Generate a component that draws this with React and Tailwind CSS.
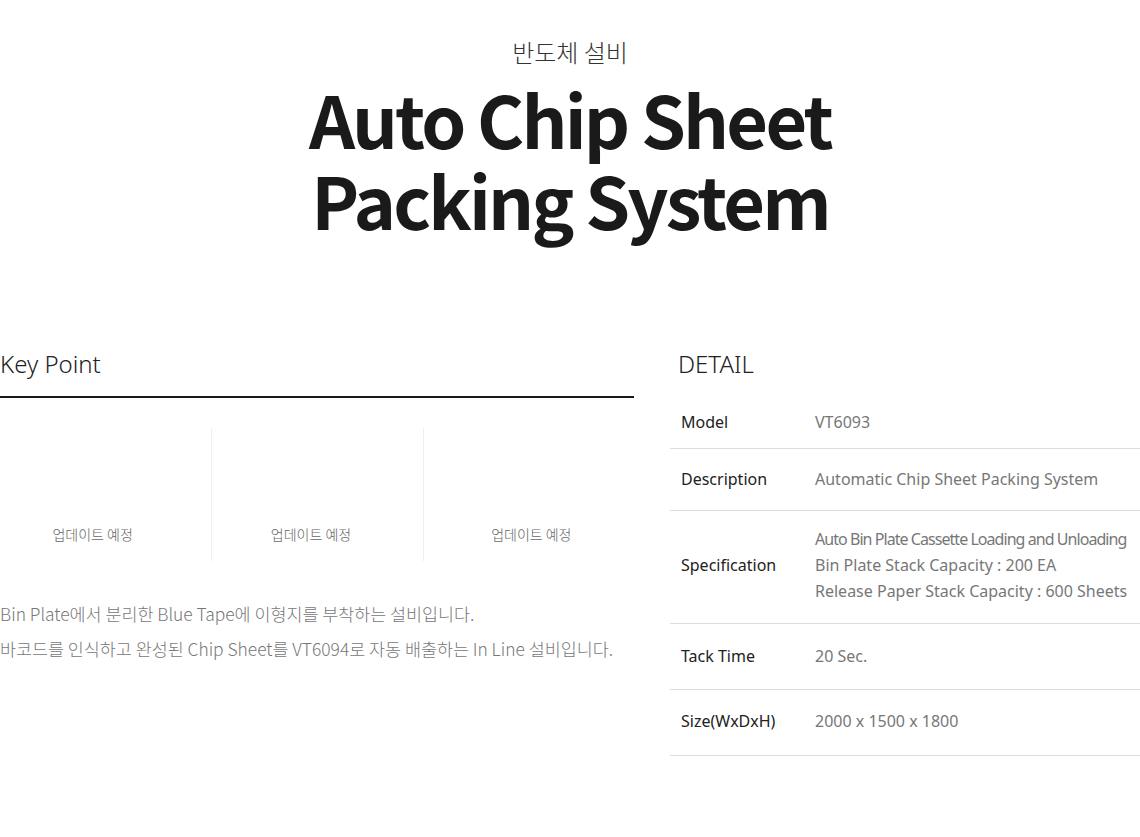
const specs = [
  { label: 'Model', value: ['VT6093'], row: 'h-[52px] pb-[1px]' },
  { label: 'Description', value: ['Automatic Chip Sheet Packing System'], row: 'h-[62px] pb-[2px]' },
  {
    label: 'Specification',
    value: [
      'Auto Bin Plate Cassette Loading and Unloading',
      'Bin Plate Stack Capacity : 200 EA',
      'Release Paper Stack Capacity : 600 Sheets',
    ],
    row: 'h-[113px] pb-[4px]',
  },
  { label: 'Tack Time', value: ['20 Sec.'], row: 'h-[66px] pb-[2px]' },
  { label: 'Size(WxDxH)', value: ['2000 x 1500 x 1800'], row: 'h-[66px] pb-[3px]' },
]

const points = ['pr-[26px]', 'pr-[13px]', 'pl-[5px]']

function App() {
  return (
    <main className="min-h-screen w-[1140px] bg-white font-['Noto_Sans','Noto_Sans_CJK_KR',sans-serif] text-[#222]">
      <header className="flex flex-col items-center pt-[34px]">
        <p className="font-['Noto_Sans_CJK_KR',sans-serif] text-[24px] font-light leading-[36px] text-[#333]">반도체 설비</p>
        <h1 className="mt-[7px] text-center font-['Noto_Sans_CJK_KR',sans-serif] text-[72px] font-bold leading-[81px] tracking-[-2.8px] text-[#1a1a1a]">
          Auto Chip Sheet
          <br />
          Packing System
        </h1>
      </header>

      <div className="mt-[107px] flex gap-[36px]">
        <section className="w-[634px]">
          <h2 className="text-[24px] font-light leading-[36px] text-[#222]">Key Point</h2>
          <div className="mt-[14px] h-[2px] bg-[#1a1a1a]" />
          <div className="mt-[30px] grid grid-cols-3">
            {points.map((pad, i) => (
              <div
                key={i}
                className={`flex h-[133px] items-end justify-center pb-[16px] ${pad} ${i > 0 ? 'border-l border-[#eeeeee]' : ''}`}
              >
                <span className="font-['Noto_Sans_CJK_KR',sans-serif] text-[14px] font-light text-[#666]">업데이트 예정</span>
              </div>
            ))}
          </div>
          <div className="mt-[35px] font-['Noto_Sans_CJK_KR',sans-serif] text-[17.4px] font-light leading-[35px] text-[#777]">
            <p>Bin Plate에서 분리한 Blue Tape에 이형지를 부착하는 설비입니다.</p>
            <p>바코드를 인식하고 완성된 Chip Sheet를 VT6094로 자동 배출하는 In Line 설비입니다.</p>
          </div>
        </section>

        <section className="flex-1">
          <h2 className="pl-[8px] text-[24px] font-light leading-[36px] text-[#222]">DETAIL</h2>
          <div className="mt-[15px]">
            {specs.map((s) => (
              <div key={s.label} className={`flex items-center border-b border-[#dddddd] pl-[11px] ${s.row}`}>
                <div className="w-[134px] shrink-0 text-[16px] leading-[26px] text-[#222]">{s.label}</div>
                <div className="whitespace-nowrap text-[16px] leading-[26px] text-[#777]">
                  {s.value.map((v) => (
                    <p key={v} className={v.startsWith('Auto Bin') ? 'tracking-[-0.95px]' : ''}>{v}</p>
                  ))}
                </div>
              </div>
            ))}
          </div>
        </section>
      </div>
    </main>
  )
}

export default App
